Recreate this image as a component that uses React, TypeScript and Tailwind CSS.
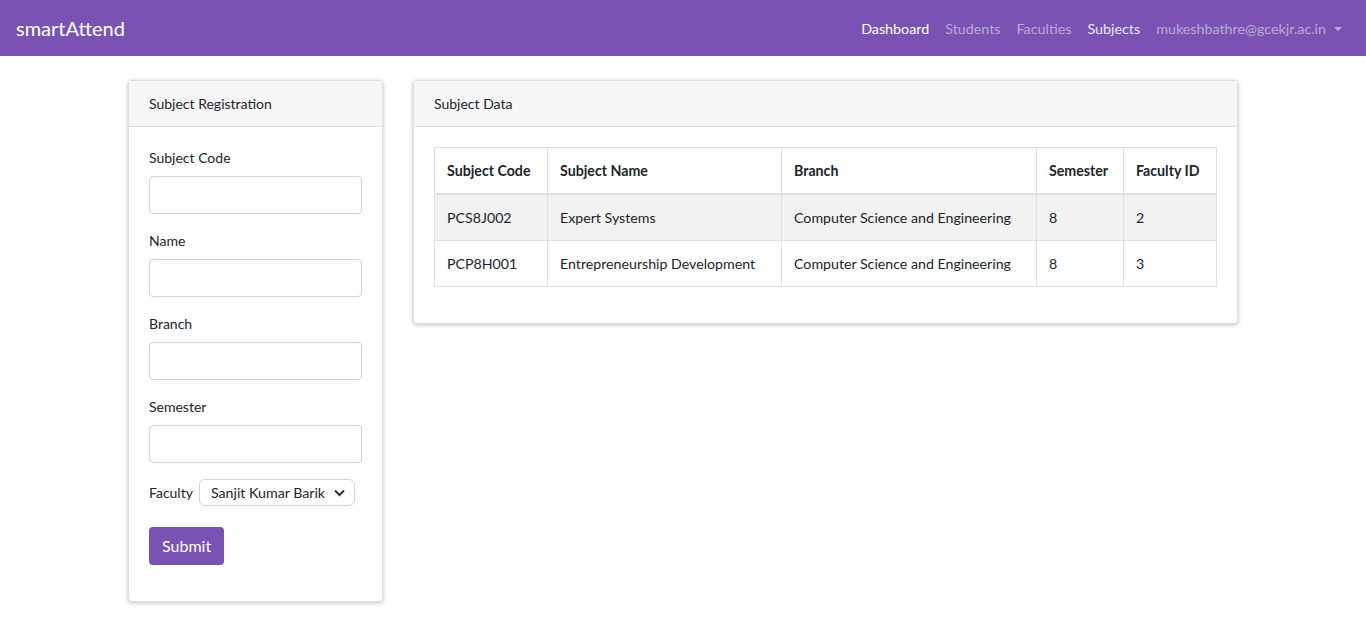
import React from "react";

const rows = [
  { code: "PCS8J002", name: "Expert Systems", branch: "Computer Science and Engineering", sem: "8", fid: "2" },
  { code: "PCP8H001", name: "Entrepreneurship Development", branch: "Computer Science and Engineering", sem: "8", fid: "3" },
];

function Field({ label }: { label: string }) {
  return (
    <div className="mb-4">
      <label className="block mb-2 text-[14px] leading-[21px]">{label}</label>
      <input className="block w-full h-[38px] border border-[#ced4da] rounded-[4px] bg-white px-3" />
    </div>
  );
}

export default function App() {
  return (
    <div className="min-h-[638px] bg-white text-[#212529]" style={{ fontFamily: "Lato, 'Noto Sans', sans-serif" }}>
      <nav className="h-[56px] bg-[#7952b3] flex items-center justify-between px-4">
        <div className="text-[20px] text-white">smartAttend</div>
        <div className="flex items-center text-[14.3px] pt-[2px]">
          <a className="px-2 text-white">Dashboard</a>
          <a className="px-2 text-white/50">Students</a>
          <a className="px-2 text-white/50">Faculties</a>
          <a className="px-2 text-white/85">Subjects</a>
          <a className="px-2 text-white/50 flex items-center">
            mukeshbathre@gcekjr.ac.in
            <span className="ml-[8px] inline-block w-0 h-0 border-l-[4px] border-r-[4px] border-t-[4px] border-l-transparent border-r-transparent border-t-white/50"></span>
          </a>
        </div>
      </nav>
      <div className="w-[1140px] mx-auto px-[15px] pt-[24px] flex gap-[30px] items-start">
        <div className="w-[255px] border border-[#dfdfdf] rounded-[4px] shadow-[0_1px_4px_rgba(0,0,0,0.25)] bg-white">
          <div className="h-[46px] bg-[#f7f7f7] border-b border-[#dfdfdf] px-5 flex items-center text-[14px]">Subject Registration</div>
          <div className="px-5 pt-5 pb-[36px]">
            <Field label="Subject Code" />
            <Field label="Name" />
            <Field label="Branch" />
            <Field label="Semester" />
            <div className="flex items-center mb-[21px] text-[14px]">
              <span className="mr-[6px]">Faculty</span>
              <div className="h-[27px] w-[156px] border border-[#ced4da] rounded-[6px] bg-white flex items-center justify-between pl-[11px] pr-[9px] text-[#212529] text-[14.2px]">
                <span>Sanjit Kumar Barik</span>
                <svg width="11" height="8" viewBox="0 0 11 8"><path d="M1 1.5 L5.5 6 L10 1.5" fill="none" stroke="#333" strokeWidth="2" /></svg>
              </div>
            </div>
            <button className="h-[38px] px-[13px] rounded-[4px] bg-[#7952b3] text-white text-[16px]">Submit</button>
          </div>
        </div>
        <div className="w-[825px] border border-[#dfdfdf] rounded-[4px] shadow-[0_1px_4px_rgba(0,0,0,0.25)] bg-white">
          <div className="h-[46px] bg-[#f7f7f7] border-b border-[#dfdfdf] px-5 flex items-center text-[14px]">Subject Data</div>
          <div className="p-5">
            <table className="w-[783px] border-collapse text-[14.2px] mb-4">
              <thead>
                <tr className="h-[46px]">
                  <th className="border border-[#dee2e6] border-b-2 px-3 text-left font-bold w-[113px]">Subject Code</th>
                  <th className="border border-[#dee2e6] border-b-2 px-3 text-left font-bold w-[234px]">Subject Name</th>
                  <th className="border border-[#dee2e6] border-b-2 px-3 text-left font-bold w-[255px]">Branch</th>
                  <th className="border border-[#dee2e6] border-b-2 px-3 text-left font-bold w-[87px]">Semester</th>
                  <th className="border border-[#dee2e6] border-b-2 px-3 text-left font-bold">Faculty ID</th>
                </tr>
              </thead>
              <tbody>
                {rows.map((r, i) => (
                  <tr key={r.code} className={i === 0 ? "h-[47px] bg-[#f2f2f2]" : "h-[46px]"}>
                    <td className="border border-[#dee2e6] px-3">{r.code}</td>
                    <td className="border border-[#dee2e6] px-3">{r.name}</td>
                    <td className="border border-[#dee2e6] px-3">{r.branch}</td>
                    <td className="border border-[#dee2e6] px-3">{r.sem}</td>
                    <td className="border border-[#dee2e6] px-3">{r.fid}</td>
                  </tr>
                ))}
              </tbody>
            </table>
          </div>
        </div>
      </div>
    </div>
  );
}
